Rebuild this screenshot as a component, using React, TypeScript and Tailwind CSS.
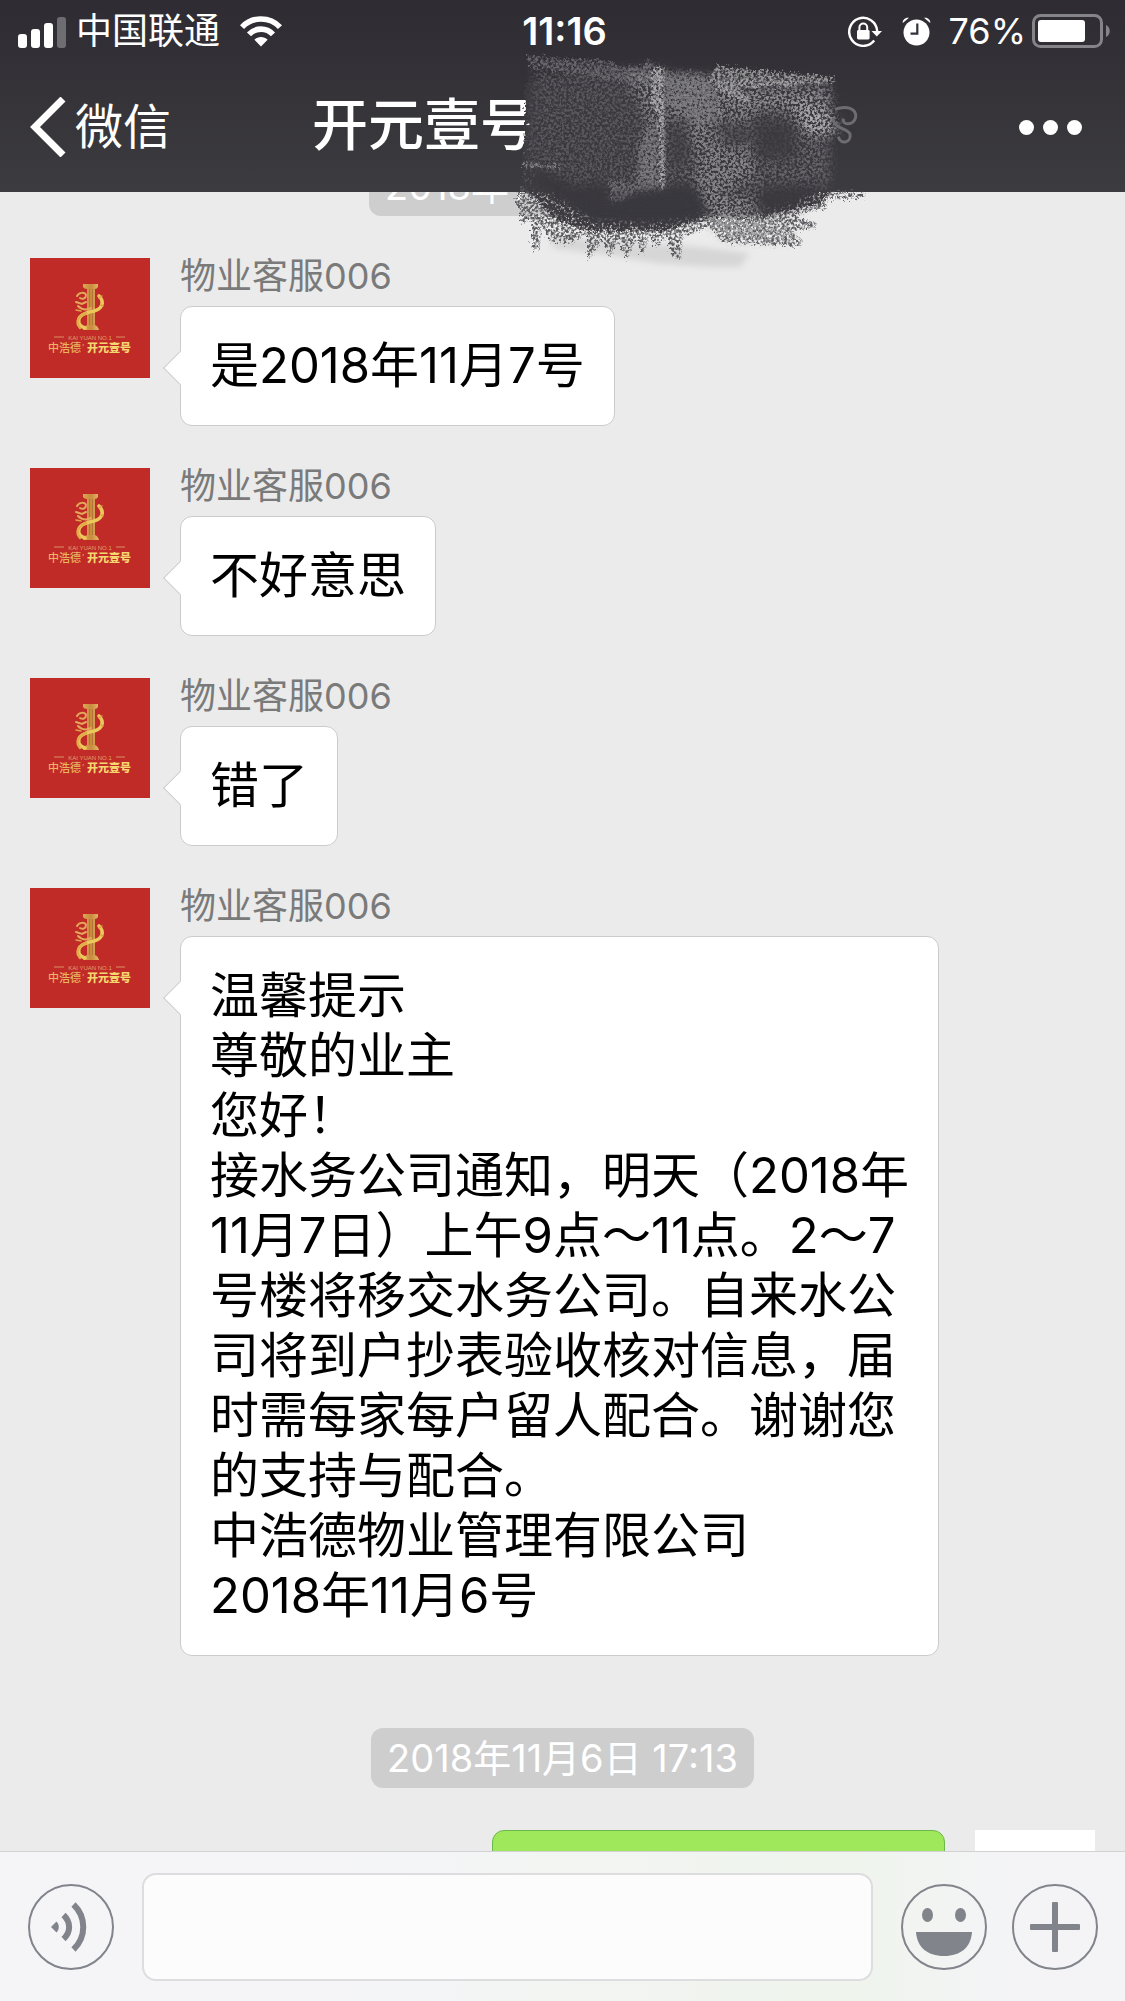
import React from 'react';

const messages: string[][] = [
  ['是2018年11月7号'],
  ['不好意思'],
  ['错了'],
  [
    '温馨提示',
    '尊敬的业主',
    '您好！',
    '接水务公司通知，明天（2018年',
    '11月7日）上午9点～11点。2～7',
    '号楼将移交水务公司。自来水公',
    '司将到户抄表验收核对信息，届',
    '时需每家每户留人配合。谢谢您',
    '的支持与配合。',
    '中浩德物业管理有限公司',
    '2018年11月6号',
  ],
];

function SignalIcon() {
  return (
    <svg width="49" height="33" viewBox="0 0 49 33" fill="#fff" aria-hidden="true">
      <rect x="0" y="19" width="9" height="14" rx="3" />
      <rect x="13" y="14" width="9" height="19" rx="3" />
      <rect x="26" y="8" width="9" height="25" rx="3" />
      <rect x="39" y="2" width="9" height="31" rx="3" opacity="0.3" />
    </svg>
  );
}

function WifiIcon() {
  return (
    <svg width="42" height="31" viewBox="0 0 42 31" aria-hidden="true">
      <g fill="none" stroke="#fff" strokeWidth="5.6">
        <path d="M2 11.2C12 0.3 30 0.3 40 11.2" />
        <path d="M9 18.4C15.5 11.4 26.5 11.4 33 18.4" />
      </g>
      <path d="M21 30.5l-6.6-6.8c3.6-3.6 9.6-3.6 13.2 0z" fill="#fff" />
    </svg>
  );
}

function RotationLockIcon() {
  return (
    <svg width="35" height="31" viewBox="0 0 35 31" fill="none" stroke="#fff" aria-hidden="true">
      <path d="M26.2 24.6A14 14 0 1 1 29.2 15" strokeWidth="2.4" />
      <path d="M23.5 15H34l-5.2 5.4z" fill="#fff" stroke="none" />
      <path d="M11.4 15v-3.6a3.9 3.9 0 0 1 7.8 0V15" strokeWidth="2" />
      <rect x="9" y="14" width="12.6" height="9.4" rx="1.4" fill="#fff" stroke="none" />
    </svg>
  );
}

function AlarmIcon() {
  return (
    <svg width="29" height="29" viewBox="0 0 29 29" aria-hidden="true">
      <circle cx="14.5" cy="15.5" r="13" fill="#fff" />
      <path d="M.8 6C.2 3 3.400 0 7 .8zM28.200 6C28.800 3 25.600 0 22 .8z" fill="#fff" />
      <path d="M15.300 6.500v10.200H8.500" fill="none" stroke="#333138" strokeWidth="2.200" />
    </svg>
  );
}

function BatteryIcon() {
  return (
    <svg width="79" height="35" viewBox="0 0 79 35" aria-hidden="true">
      <rect x="1.500" y="1.500" width="68" height="31" rx="7" fill="none" stroke="#858489" strokeWidth="3" />
      <rect x="6" y="6" width="47" height="22" rx="3" fill="#fff" />
      <path d="M74 11c5 2 5 10 0 12z" fill="#858489" />
    </svg>
  );
}

function BrandAvatar() {
  return (
    <svg
      className="size-[120px] shrink-0 bg-[#c02a27]"
      viewBox="0 0 120 120"
      role="img"
      aria-label="物业客服006"
    >
      <defs>
        <linearGradient id="gold" x1="0" x2="1" y1="0" y2="0">
          <stop offset="0" stopColor="#dca855" />
          <stop offset="0.5" stopColor="#c98a3e" />
          <stop offset="1" stopColor="#e6b865" />
        </linearGradient>
      </defs>
      <path d="M53 26h15v3q-1 2-3 2v36q3 1 4 5H53q1-4 4-5V31q-3 0-4-2z" fill="url(#gold)" />
      <path d="M59.500 31v36M62.500 31v36" stroke="#b8743a" strokeWidth="1" />
      <g fill="none" strokeLinecap="round">
        <path d="M69 38c6 6 3 13-5 15-10 2-17 5-15 12 1 3 3 4 6 5" stroke="#ecc75c" strokeWidth="3.600" />
        <path d="M50 70c-5-6-2-12 6-15" stroke="#e0ad49" strokeWidth="2.500" />
        <path d="M47 38c2-4 8-4 9-1 0 3-3 5-6 3M46 44l6 2 4-2M48 48c4 4 9 4 13 2" stroke="#e3a95a" strokeWidth="2" />
        <path d="M69 40l3-2M71 47l2 1M46 52l5 1" stroke="#d9a548" strokeWidth="1.500" />
      </g>
      <path d="M24 79h10M86 79h9" stroke="#d98f62" strokeWidth="1" />
      <text x="60" y="82" textAnchor="middle" fontSize="6" fill="#e3a069" fontFamily="'Liberation Sans', sans-serif">
        KAI YUAN NO.1
      </text>
      <text x="18" y="94" fontSize="11" fill="#eab462" fontFamily="'Noto Sans CJK SC', sans-serif" fontWeight="500">
        中浩德
      </text>
      <text x="52" y="92" fontSize="8" fill="#eab462" fontFamily="Inter, sans-serif">
        ’
      </text>
      <text x="57" y="94" fontSize="11" fill="#f6d66e" fontFamily="'Noto Sans CJK SC', sans-serif" fontWeight="900">
        开元壹号
      </text>
    </svg>
  );
}

function Scribble() {
  return (
    <svg
      className="pointer-events-none absolute left-[510px] top-10 z-20 h-[240px] w-[370px]"
      viewBox="0 0 1110 720"
      aria-hidden="true"
    >
      <defs>
        <filter id="chalkDense" x="-5%" y="-5%" width="110%" height="110%">
          <feTurbulence type="fractalNoise" baseFrequency="0.12" numOctaves="3" seed="4" result="n" />
          <feColorMatrix in="n" type="matrix" values="0 0 0 0 0  0 0 0 0 0  0 0 0 0 0  5 0 0 0 -1.5" result="m" />
          <feDisplacementMap in="SourceGraphic" in2="n" scale="34" xChannelSelector="R" yChannelSelector="G" result="d" />
          <feComposite in="d" in2="m" operator="in" />
        </filter>
        <filter id="chalk" x="-10%" y="-10%" width="120%" height="120%">
          <feTurbulence type="fractalNoise" baseFrequency="0.13" numOctaves="3" seed="9" result="n" />
          <feColorMatrix in="n" type="matrix" values="0 0 0 0 0  0 0 0 0 0  0 0 0 0 0  4 0 0 0 -1.5" result="m" />
          <feDisplacementMap in="SourceGraphic" in2="n" scale="36" xChannelSelector="R" yChannelSelector="G" result="d" />
          <feComposite in="d" in2="m" operator="in" />
        </filter>
        <filter id="dust" x="-20%" y="-20%" width="140%" height="140%">
          <feGaussianBlur in="SourceGraphic" stdDeviation="16" result="b" />
          <feTurbulence type="fractalNoise" baseFrequency="0.13" numOctaves="3" seed="21" result="n" />
          <feColorMatrix in="n" type="matrix" values="0 0 0 0 0  0 0 0 0 0  0 0 0 0 0  0 4 0 0 -1.6" result="m" />
          <feComposite in="b" in2="m" operator="in" />
        </filter>
        <filter id="soft" x="-30%" y="-30%" width="160%" height="160%">
          <feGaussianBlur stdDeviation="18" />
        </filter>
        <filter id="smear" x="-20%" y="-20%" width="140%" height="140%">
          <feGaussianBlur stdDeviation="10" />
        </filter>
      </defs>

      <path d="M120 590L560 620L720 640L690 680L600 680L440 670L300 645L130 625Z" fill="#d6d6d6" filter="url(#smear)" />

      <path
        d="M60 180L960 180L955 450L1065 462L1065 474L955 480L950 505L850 525L920 548L920 566L840 570L878 598L872 620L640 606L600 560L520 590L512 664L486 640L470 590L440 625L420 580L400 645L380 600L350 656L330 600L300 650L280 600L236 660L232 580L180 612L120 600L95 560L90 630L68 630L66 540L35 552L30 510L15 480L40 440Z"
        fill="#5a5a5e"
        filter="url(#chalk)"
      />
      <path
        d="M48 130L300 80L580 92L970 120L965 450L930 490L740 535L600 530L480 570L250 575L140 540L80 480L40 440Z"
        fill="#3c3b40"
        filter="url(#chalkDense)"
      />
      <path d="M62 130L940 130L930 430L900 470L740 510L560 525L420 545L240 535L150 480L80 440Z" fill="#3a393e" filter="url(#smear)" />

      <path d="M50 46L310 64L330 84L400 80L412 56L465 95L575 95L600 130L580 150L340 125L60 80Z" fill="#66656a" filter="url(#chalk)" />
      <path d="M70 80L340 90L440 200L440 450L300 490L290 420L200 440L60 370Z" fill="#747378" opacity="0.550" filter="url(#dust)" />
      <path d="M470 100L960 130L960 430L740 470L640 590L560 440L470 430Z" fill="#77767a" opacity="0.750" filter="url(#dust)" />
      <path d="M475 110L600 115L740 190L730 400L650 450L600 520L560 440L560 330L475 240Z" fill="#8c8b8f" opacity="0.900" filter="url(#dust)" />
      <path d="M470 115L600 120L630 180L620 240L560 260L470 190Z" fill="#79787c" filter="url(#chalk)" />
      <path d="M620 335L725 338L725 400L650 440L570 430Z" fill="#858488" opacity="0.700" filter="url(#dust)" />
      <path d="M620 76L975 112L975 130L860 135L600 120Z" fill="#969598" filter="url(#chalk)" />
      <path d="M600 122L870 126L860 140L690 142L735 195L660 170Z" fill="#a3a2a5" filter="url(#chalk)" />
      <path d="M700 150L960 150L960 270L900 290L840 210L720 200Z" fill="#929195" filter="url(#dust)" />
      <path d="M850 180L970 230L990 280L890 280Z" fill="#b0afb2" filter="url(#dust)" />
      <path d="M340 90L466 84L466 450L400 448L380 440L410 230Z" fill="#88878b" filter="url(#dust)" />
      <path d="M395 300L465 200L465 448L402 448L310 494L300 420L380 430Z" fill="#77767a" opacity="0.800" filter="url(#chalk)" />
      <path d="M430 84L466 84L468 448L454 448L450 230L425 190Z" fill="#aaa9ac" filter="url(#chalk)" />
      <path d="M35 366L150 376L150 388L40 378Z" fill="#828184" filter="url(#chalk)" />

      <path d="M150 450L290 500L410 455L540 445L590 520L480 545L260 545Z" fill="#38373c" filter="url(#soft)" />
      <path d="M480 240L540 240L530 380L480 390ZM610 245L740 250L730 320L640 320Z" fill="#3c3b40" opacity="0.700" filter="url(#soft)" />
      <path d="M770 430L900 440L870 500L730 530ZM730 230L850 250L860 350L740 360Z" fill="#3a393e" opacity="0.800" filter="url(#soft)" />
      <path d="M600 470L740 480L740 540L840 570L850 600L660 600L610 560Z" fill="#9a999c" opacity="0.900" filter="url(#dust)" />
      <path
        d="M975 208C1010 195 1040 205 1037 232C1030 258 995 256 1000 236M968 235C975 270 1010 262 1020 282C1025 310 990 315 985 290"
        fill="none"
        stroke="#6d6c70"
        strokeWidth="9"
      />
    </svg>
  );
}

function Message({ lines }: { lines: string[] }) {
  return (
    <article className="flex items-start gap-[30px] pl-[30px]">
      <BrandAvatar />
      <div className="flex flex-col items-start">
        <h2 className="mb-3 text-4xl/9 text-[#7a7a7a]">物业客服006</h2>
        <div className="relative rounded-xl border border-[#cbcbcb] bg-white px-[29px] py-[29px] text-black">
          <span className="absolute -left-[13px] top-[49px] size-6 rotate-45 border-b border-l border-[#cbcbcb] bg-white" />
          {lines.map((line) => (
            <p key={line} className="relative whitespace-nowrap text-[49px]/[60px]">
              {line}
            </p>
          ))}
        </div>
      </div>
    </article>
  );
}

export default function App() {
  return (
    <div className="relative flex h-screen flex-col overflow-hidden bg-[#ebebeb] font-[Inter,'Noto_Sans_CJK_SC',sans-serif]">
      <header className="z-10 shrink-0 bg-linear-to-b from-[#2e2c32] to-[#3c3b3f] text-white">
        <div className="grid h-[62px] grid-cols-[1fr_auto_1fr] items-center pl-[18px] pr-[14px]">
          <div className="flex items-center">
            <SignalIcon />
            <span className="ml-[9px] mr-5 text-4xl">中国联通</span>
            <WifiIcon />
          </div>
          <time className="text-[38px] font-semibold">11:16</time>
          <div className="flex items-center justify-end">
            <RotationLockIcon />
            <span className="ml-[19px] mr-[18px]">
              <AlarmIcon />
            </span>
            <span className="mr-[6px] text-4xl">76%</span>
            <BatteryIcon />
          </div>
        </div>
        <nav className="flex h-[130px] items-center pl-[30px] pr-[43px]">
          <button type="button" className="flex w-[282px] items-center gap-[9px] text-[48px]">
            <svg width="36" height="60" viewBox="0 0 36 60" fill="none" aria-hidden="true">
              <path d="M33 2L5 30L33 58" stroke="#fff" strokeWidth="7" />
            </svg>
            微信
          </button>
          <h1 className="flex-1 pb-1 text-[56px] font-medium">开元壹号</h1>
          <button type="button" aria-label="更多" className="flex gap-[9px]">
            <span className="size-[15px] rounded-full bg-white" />
            <span className="size-[15px] rounded-full bg-white" />
            <span className="size-[15px] rounded-full bg-white" />
          </button>
        </nav>
      </header>

      <Scribble />

      <main className="flex min-h-0 flex-1 flex-col gap-[42px] overflow-hidden">
        <time className="-mt-9 h-[60px] w-[387px] shrink-0 self-center rounded-xl bg-[#cecece] px-4 text-[38px]/[60px] text-white">
          2018年1
        </time>
        {messages.map((lines) => (
          <Message key={lines[0]} lines={lines} />
        ))}
        <time className="mt-[30px] shrink-0 self-center rounded-xl bg-[#cecece] px-4 text-[38px]/[60px] text-white">
          2018年11月6日 17:13
        </time>
        <div className="flex shrink-0 items-start justify-end gap-[30px] pr-[30px]">
          <div className="h-[120px] w-[453px] rounded-xl border border-[#6cb84c] bg-[#a0e85b]" />
          <div className="size-[120px] bg-white" />
        </div>
      </main>

      <footer className="flex h-[150px] shrink-0 items-center gap-7 border-t border-[#d2d2d6] bg-linear-to-r from-[#f5f5f8] from-30% via-[#eff4ec] via-75% to-[#f4f4f7] to-90% pl-7 pr-[27px]">
        <button type="button" aria-label="语音" className="shrink-0">
          <svg width="86" height="86" viewBox="0 0 86 86" fill="none" stroke="#81848b">
            <circle cx="43" cy="43" r="42" strokeWidth="2" />
            <path d="M45.500 20.500C58.500 33 58.500 53 45.500 65.500" strokeWidth="6" />
            <path d="M35.500 31C43 38 43 48 35.500 55" strokeWidth="6" />
            <path d="M23 43l5.500-5.500c3 3 3 8 0 11z" fill="#81848b" stroke="none" />
          </svg>
        </button>
        <input
          type="text"
          aria-label="输入消息"
          className="h-[108px] min-w-0 flex-1 rounded-[14px] border-2 border-[#dddddf] bg-[#fcfcfc] px-6 text-[49px] outline-none"
        />
        <div className="flex shrink-0 gap-[25px]">
          <button type="button" aria-label="表情">
            <svg width="86" height="86" viewBox="0 0 86 86" fill="#81848b">
              <circle cx="43" cy="43" r="42" fill="none" stroke="#81848b" strokeWidth="2" />
              <ellipse cx="26.500" cy="31" rx="5.500" ry="7" />
              <ellipse cx="59.500" cy="31" rx="5.500" ry="7" />
              <path d="M15 48h56c-1 15-11 24-28 24S16 63 15 48z" />
            </svg>
          </button>
          <button type="button" aria-label="更多功能">
            <svg width="86" height="86" viewBox="0 0 86 86" fill="#81848b">
              <circle cx="43" cy="43" r="42" fill="none" stroke="#81848b" strokeWidth="2" />
              <rect x="18" y="40" width="50" height="6" rx="1" />
              <rect x="40" y="18" width="6" height="50" rx="1" />
            </svg>
          </button>
        </div>
      </footer>
    </div>
  );
}
